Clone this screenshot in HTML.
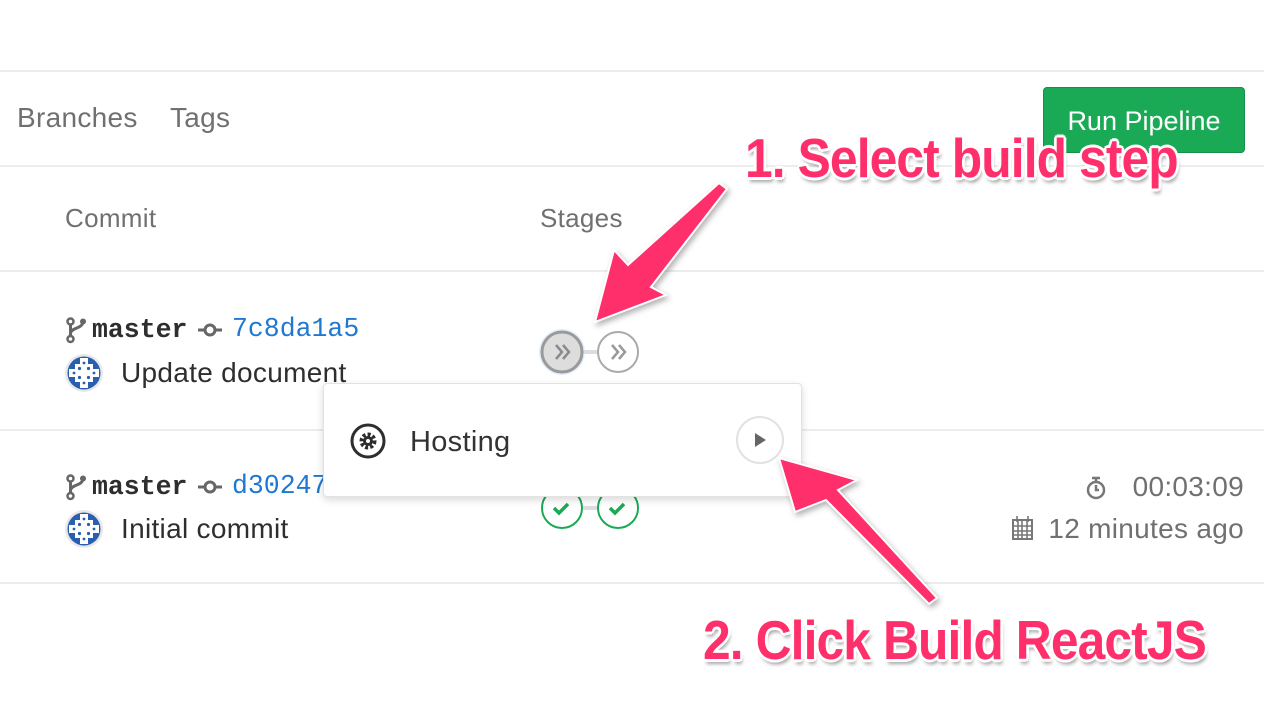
<!DOCTYPE html>
<html><head><meta charset="utf-8"><style>
body{margin:0;width:1264px;height:712px;background:#fff;position:relative;overflow:hidden;font-family:"Liberation Sans",sans-serif;}
.a{position:absolute;white-space:nowrap;}
.hl{position:absolute;left:0;width:1264px;height:2px;background:#ececec;}
.t{font-size:28px;color:#2e2e2e;letter-spacing:0.3px;}
.g{color:#707070;}
.mono{font-family:"Liberation Mono",monospace;font-size:26.5px;}
.ann{font-family:"Liberation Sans",sans-serif;font-weight:bold;font-size:55px;color:#ff2f6c;letter-spacing:-1px;transform:scaleX(0.905);transform-origin:0 0;
text-shadow:-2px -2px 0 #fff,2px -2px 0 #fff,-2px 2px 0 #fff,2px 2px 0 #fff,0 3px 0 #fff,3px 0 0 #fff,0 -3px 0 #fff,-3px 0 0 #fff,2px 5px 4px rgba(0,0,0,.35);}
</style></head><body>
<div class="hl" style="top:70px"></div>
<div class="a t g" style="left:17px;top:102px">Branches</div>
<div class="a t g" style="left:170px;top:102px">Tags</div>
<div class="a" style="left:1043px;top:87px;width:200px;height:64px;background:#1aaa55;border:1px solid #168f48;border-radius:4px;color:#fff;font-size:27px;line-height:66px;text-align:center">Run Pipeline</div>
<div class="hl" style="top:165px"></div>
<div class="a t g" style="left:65px;top:203px;font-size:26px">Commit</div>
<div class="a t g" style="left:540px;top:203px;font-size:26px">Stages</div>
<div class="hl" style="top:270px"></div>
<div class="hl" style="top:429px"></div>
<div class="hl" style="top:582px"></div>

<svg class="a" style="left:0;top:0" width="1264" height="712">
 <defs><g id="br"><circle cx="3.5" cy="3.5" r="3" fill="none" stroke="#666" stroke-width="2.5"/><circle cx="3.5" cy="21" r="3" fill="none" stroke="#666" stroke-width="2.5"/><path d="M3.5 7V18M3.5 15C5 9 16 11 16 3" fill="none" stroke="#666" stroke-width="3"/><circle cx="16" cy="3.5" r="3" fill="#666"/></g>
 <g id="cm"><path d="M0 0H24" stroke="#666" stroke-width="3"/><circle cx="12" cy="0" r="5" fill="#fff" stroke="#666" stroke-width="3"/></g>
 <g id="av"><circle r="19" fill="#e8e8e8"/><circle r="16.5" fill="#2a5fb0"/><g fill="#fff"><rect x="-9" y="-9" width="18" height="18"/><rect x="-4" y="-15" width="8" height="30"/><rect x="-15" y="-4" width="30" height="8"/></g><g fill="#2a5fb0"><circle cx="-4.5" cy="-4.5" r="1.6"/><circle cx="4.5" cy="-4.5" r="1.6"/><circle cx="-4.5" cy="4.5" r="1.6"/><circle cx="4.5" cy="4.5" r="1.6"/><circle cx="0" cy="-10" r="1.4"/><circle cx="0" cy="10" r="1.4"/><circle cx="-10" cy="0" r="1.4"/><circle cx="10" cy="0" r="1.4"/></g></g></defs>
 <use href="#br" x="67" y="318"/><use href="#cm" x="198" y="330"/><use href="#av" x="84" y="373"/>
 <use href="#br" x="67" y="475"/><use href="#cm" x="198" y="487"/><use href="#av" x="84" y="529"/>
 <path d="M583 352H597" stroke="#ddd" stroke-width="4"/>
 <circle cx="562" cy="352" r="23" fill="#cfe3ff" opacity=".6"/>
 <circle cx="562" cy="352" r="20" fill="#ddd" stroke="#9a9a9a" stroke-width="3"/>
 <path d="M556 345l6 7-6 7M563 345l6 7-6 7" fill="none" stroke="#8a8a8a" stroke-width="2.5"/>
 <circle cx="618" cy="352" r="20" fill="#fff" stroke="#aaa" stroke-width="2"/>
 <path d="M612 345l6 7-6 7M619 345l6 7-6 7" fill="none" stroke="#999" stroke-width="2.5"/>
 <path d="M583 508H597" stroke="#ddd" stroke-width="4"/>
 <circle cx="562" cy="508" r="20" fill="#fff" stroke="#1aaa55" stroke-width="2"/>
 <path d="M554 508l5 5 9-9" fill="none" stroke="#1aaa55" stroke-width="3.5"/>
 <circle cx="618" cy="508" r="20" fill="#fff" stroke="#1aaa55" stroke-width="2"/>
 <path d="M610 508l5 5 9-9" fill="none" stroke="#1aaa55" stroke-width="3.5"/>
 <circle cx="1096" cy="490" r="8" fill="none" stroke="#777" stroke-width="2.5"/><path d="M1092 478h8M1096 479v3M1096 485v5h3" stroke="#777" stroke-width="2.5" fill="none"/>
 <rect x="1013" y="520" width="19" height="19" fill="none" stroke="#777" stroke-width="2"/><path d="M1013 526h19M1013 531h19M1013 535h19M1018 521v18M1022 521v18M1027 521v18M1017 516v6M1028 516v6" stroke="#777" stroke-width="1.6"/>
</svg>
<div class="a mono" style="left:92px;top:315px;font-weight:bold;color:#2e2e2e">master</div>
<div class="a mono" style="left:232px;top:314px;color:#1f78d1">7c8da1a5</div>
<div class="a t" style="left:121px;top:357px">Update document</div>
<div class="a mono" style="left:92px;top:472px;font-weight:bold;color:#2e2e2e">master</div>
<div class="a mono" style="left:232px;top:471px;color:#1f78d1">d30247</div>
<div class="a t" style="left:121px;top:513px">Initial commit</div>
<div class="a t g" style="right:20px;top:471px">00:03:09</div>
<div class="a t g" style="right:20px;top:513px">12 minutes ago</div>

<div class="a" style="left:323px;top:383px;width:477px;height:112px;background:#fff;border:1px solid #e2e2e2;border-radius:4px;box-shadow:0 3px 8px rgba(0,0,0,.15)"></div>
<svg class="a" style="left:348px;top:421px" width="40" height="40"><circle cx="20" cy="20" r="16" fill="none" stroke="#2e2e2e" stroke-width="3"/><circle cx="20" cy="20" r="6.5" fill="none" stroke="#2e2e2e" stroke-width="4" stroke-dasharray="3 2"/><circle cx="20" cy="20" r="5" fill="#2e2e2e"/><circle cx="20" cy="20" r="2" fill="#fff"/></svg>
<div class="a t" style="left:410px;top:426px;color:#333;font-size:29px">Hosting</div>
<svg class="a" style="left:735px;top:416px" width="50" height="50"><circle cx="25" cy="24" r="23" fill="#fff" stroke="#e2e2e2" stroke-width="2"/><path d="M20 17L31 24 20 31Z" fill="#666"/></svg>

<svg class="a" style="left:0;top:0" width="1264" height="712">
 <g fill="#ff2f6c" stroke="#fff" stroke-width="2" style="filter:drop-shadow(2px 3px 3px rgba(0,0,0,.3))">
  <path d="M719 183L727 189L651 287L666 295L595 322L614 250L628 265Z"/>
  <path d="M937 598L929 604L826 500L795 512L779 458L857 480L838 490Z"/>
 </g>
</svg>
<div class="a ann" style="left:745px;top:126px">1. Select build step</div>
<div class="a ann" style="left:703px;top:608px">2. Click Build ReactJS</div>
</body></html>
